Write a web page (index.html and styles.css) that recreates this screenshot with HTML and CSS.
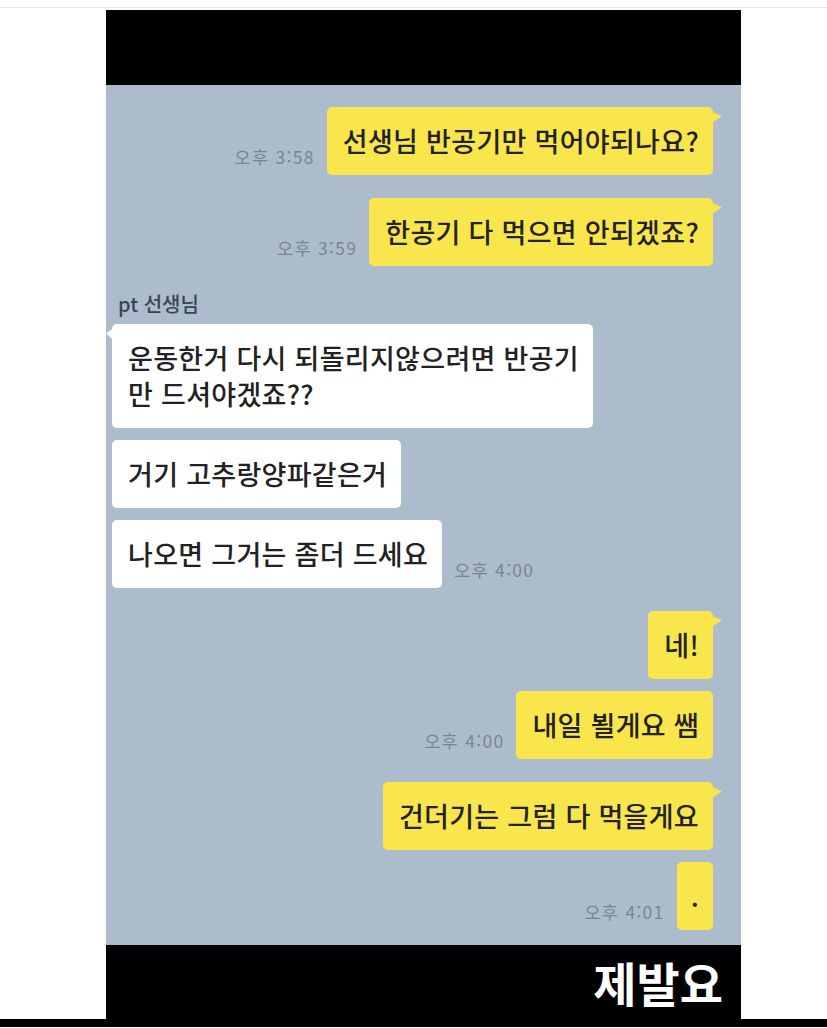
FILE: index.html
```html
<!DOCTYPE html>
<html lang="ko">
<head>
  <meta charset="UTF-8">
  <meta name="viewport" content="width=device-width, initial-scale=1.0">
  <title>pt 선생님</title>
  <link rel="stylesheet" href="styles.css">
</head>
<body>
  <div class="topline"></div>

  <div class="phone">
    <div class="bar-top"></div>

    <div class="chat">
      <div class="row me">
        <span class="time">오후 3:58</span>
        <div class="bubble tail">선생님 반공기만 먹어야되나요?</div>
      </div>
      <div class="row me group">
        <span class="time">오후 3:59</span>
        <div class="bubble tail">한공기 다 먹으면 안되겠죠?</div>
      </div>

      <div class="name">pt 선생님</div>
      <div class="row you">
        <div class="bubble tail">운동한거 다시 되돌리지않으려면 반공기<br>만 드셔야겠죠??</div>
      </div>
      <div class="row you">
        <div class="bubble">거기 고추랑양파같은거</div>
      </div>
      <div class="row you">
        <div class="bubble">나오면 그거는 좀더 드세요</div>
        <span class="time">오후 4:00</span>
      </div>

      <div class="row me group">
        <div class="bubble tail">네!</div>
      </div>
      <div class="row me">
        <span class="time">오후 4:00</span>
        <div class="bubble">내일 뵐게요 쌤</div>
      </div>
      <div class="row me group">
        <div class="bubble tail">건더기는 그럼 다 먹을게요</div>
      </div>
      <div class="row me">
        <span class="time">오후 4:01</span>
        <div class="bubble dot">.</div>
      </div>
    </div>

    <div class="bar-bottom">제발요</div>
  </div>

  <div class="bottomline"></div>
</body>
</html>
```

FILE: styles.css
```css
body {
  margin: 0;
  background: #fff;
  font-family: "Noto Sans CJK KR", "Noto Sans", sans-serif;
  color: #222;
}
.topline {
  height: 7px;
  border-bottom: 1px solid #e6e6e6;
}
.phone {
  width: 635px;
  margin: 2px 0 0 106px;
}
.bar-top {
  height: 75px;
  background: #000;
}
.chat {
  background: #adbccd;
  padding: 22px 28px 15px 6px;
  display: flex;
  flex-direction: column;
}
.row {
  display: flex;
  align-items: flex-end;
  gap: 12px;
  margin-top: 12px;
}
.row:first-child {
  margin-top: 0;
}
.row.group {
  margin-top: 23px;
}
.row.me {
  justify-content: flex-end;
}
.row.you {
  justify-content: flex-start;
}
.name {
  margin: 26px 0 8px 6px;
  font-size: 20px;
  line-height: 24px;
  font-weight: 500;
  color: #3b4450;
}
.name + .row {
  margin-top: 0;
}
.bubble {
  position: relative;
  font-size: 27px;
  font-weight: 500;
  letter-spacing: 0.3px;
  line-height: 36px;
  padding: 16px 14px 16px 16px;
  border-radius: 5px;
}
.me .bubble {
  background: #f9e54c;
}
.you .bubble {
  background: #fff;
}
.me .bubble.tail::after {
  content: "";
  position: absolute;
  top: 5px;
  right: -9px;
  border-left: 10px solid #f9e54c;
  border-top: 4px solid transparent;
  border-bottom: 7px solid transparent;
}
.you .bubble.tail::after {
  content: "";
  position: absolute;
  top: 5px;
  left: -6px;
  border-right: 7px solid #fff;
  border-top: 4px solid transparent;
  border-bottom: 7px solid transparent;
}
.bubble.dot {
  padding: 16px 14px;
}
.time {
  font-size: 17.5px;
  letter-spacing: 1.3px;
  color: #7a8494;
  margin-bottom: 6px;
  white-space: nowrap;
}
.bar-bottom {
  height: 74px;
  background: #000;
  color: #fff;
  font-size: 47px;
  font-weight: bold;
  text-align: right;
  padding-right: 18px;
  line-height: 74px;
  box-sizing: border-box;
}
.bottomline {
  height: 8px;
  background: #000;
}
```
